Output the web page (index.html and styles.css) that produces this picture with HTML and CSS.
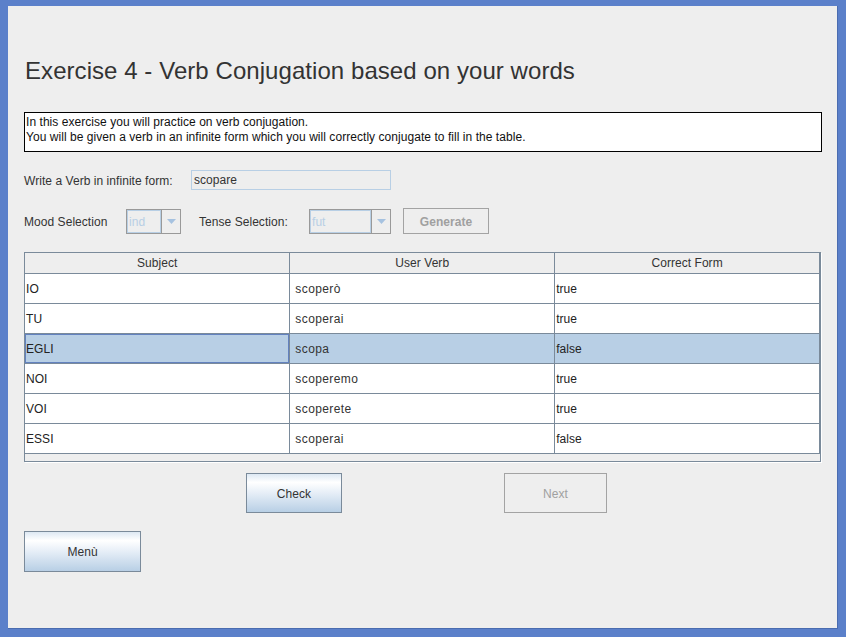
FILE: index.html
```html
<!DOCTYPE html>
<html>
<head>
<meta charset="utf-8">
<link rel="stylesheet" href="styles.css">
</head>
<body>
<div class="frame">
  <h1 class="title">Exercise 4 - Verb Conjugation based on your words</h1>
  <div class="desc">
    <div>In this exercise you will practice on verb conjugation.</div>
    <div>You will be given a verb in an infinite form which you will correctly conjugate to fill in the table.</div>
  </div>
  <div class="verb-row">
    <span class="label verb-label">Write a Verb in infinite form:</span>
    <div class="textfield">scopare</div>
  </div>
  <div class="mood-row">
    <span class="label mood-label">Mood Selection</span>
    <div class="combo combo-mood">
      <div class="combo-field">ind</div>
      <div class="combo-arrow"><svg width="9" height="5" viewBox="0 0 9 5"><path d="M0 0H9L4.5 5Z" fill="#a6c2e0"/></svg></div>
    </div>
    <span class="label tense-label">Tense Selection:</span>
    <div class="combo combo-tense">
      <div class="combo-field">fut</div>
      <div class="combo-arrow"><svg width="9" height="5" viewBox="0 0 9 5"><path d="M0 0H9L4.5 5Z" fill="#a6c2e0"/></svg></div>
    </div>
    <div class="btn-disabled btn-generate">Generate</div>
  </div>
  <div class="pane">
    <table class="grid">
      <thead>
        <tr><th>Subject</th><th>User Verb</th><th>Correct Form</th></tr>
      </thead>
      <tbody>
        <tr><td>IO</td><td class="verb">scoperò</td><td>true</td></tr>
        <tr><td>TU</td><td class="verb">scoperai</td><td>true</td></tr>
        <tr class="selected"><td class="focus">EGLI</td><td class="verb">scopa</td><td>false</td></tr>
        <tr><td>NOI</td><td class="verb">scoperemo</td><td>true</td></tr>
        <tr><td>VOI</td><td class="verb">scoperete</td><td>true</td></tr>
        <tr><td>ESSI</td><td class="verb">scoperai</td><td>false</td></tr>
      </tbody>
    </table>
  </div>
  <div class="actions">
    <div class="btn btn-check">Check</div>
    <div class="btn-disabled btn-next">Next</div>
  </div>
  <div class="btn btn-menu">Menù</div>
</div>
</body>
</html>
```
FILE: styles.css
```css
html, body {
  margin: 0;
  padding: 0;
}
body {
  font-family: "Liberation Sans", Arial, sans-serif;
  font-size: 12px;
  letter-spacing: 0.05px;
  color: #333333;
  background: #5b7fc9;
}
.frame {
  box-sizing: border-box;
  width: 846px;
  height: 637px;
  border-style: solid;
  border-color: #5b80ca;
  border-width: 6px 8px 8px 8px;
  background: #eeeeee;
  padding: 0 16px;
  box-shadow: inset -1px -1px 0 #4a6cb0;
}
.title {
  margin: 51px 0 0 1px;
  font-size: 24px;
  font-weight: normal;
  line-height: 28px;
  letter-spacing: 0.06px;
  color: #333333;
}
.desc {
  margin-top: 27px;
  box-sizing: border-box;
  height: 40px;
  border: 1px solid #000000;
  background: #ffffff;
  padding: 2px 1px 0 1px;
  line-height: 15px;
  color: #111111;
}
.label {
  color: #333333;
  white-space: nowrap;
}
.verb-row {
  margin-top: 18px;
  display: flex;
  align-items: center;
  height: 20px;
}
.verb-label {
  width: 167px;
  flex: none;
  padding-top: 1px;
}
.textfield {
  box-sizing: border-box;
  width: 200px;
  height: 20px;
  border: 1px solid #b8cfe5;
  background: #eeeeee;
  padding-left: 2px;
  line-height: 19px;
  color: #333333;
}
.mood-row {
  margin-top: 18px;
  display: flex;
  align-items: center;
  height: 26px;
}
.mood-label {
  width: 102px;
  flex: none;
  padding-top: 2px;
}
.combo {
  box-sizing: border-box;
  height: 25px;
  border: 1px solid #999999;
  display: flex;
  margin-top: 1px;
}
.combo-mood {
  width: 55px;
}
.combo-tense {
  width: 82px;
}
.combo-field {
  flex: 1;
  box-sizing: border-box;
  border: 1px solid #b8cfe5;
  color: #b8cfe5;
  line-height: 22px;
  padding-left: 1px;
}
.combo-arrow {
  width: 18px;
  border-left: 1px solid #999999;
  display: flex;
  align-items: center;
  justify-content: center;
}
.tense-label {
  margin-left: 18px;
  width: 110px;
  padding-top: 2px;
}
.btn-generate {
  margin-left: 12px;
  width: 86px;
  height: 26px;
  font-weight: bold;
  padding-top: 1px;
}
.btn-disabled {
  box-sizing: border-box;
  border: 1px solid #a3a3a3;
  background: #eeeeee;
  color: #a0a0a0;
  display: flex;
  align-items: center;
  justify-content: center;
}
.pane {
  margin-top: 18px;
  box-sizing: border-box;
  width: 797px;
  height: 210px;
  border: 1px solid #7a8a9a;
  box-shadow: 1px 1px 0 #ffffff;
  background: #eeeeee;
}
.grid {
  width: 795px;
  border-collapse: collapse;
  table-layout: fixed;
}
.grid th {
  box-sizing: border-box;
  height: 20px;
  padding: 1px 0 0 0;
  font-weight: normal;
  text-align: center;
  color: #333333;
  background: #eeeeee;
  border-bottom: 1px solid #7a8a9a;
  border-right: 1px solid #7a8a9a;
}
.grid td {
  box-sizing: border-box;
  height: 30px;
  padding: 2px 0 0 1px;
  background: #ffffff;
  border-bottom: 1px solid #7a8a9a;
  border-right: 1px solid #7a8a9a;
  color: #222222;
}
.grid td.verb {
  padding-left: 5px;
  letter-spacing: 0.4px;
  color: #333333;
}
.grid tr.selected td {
  background: #b8cfe5;
}
.grid td.focus {
  box-shadow: inset 0 0 0 1px #6382bf;
}
.actions {
  margin-top: 11px;
  display: flex;
  padding-left: 222px;
  gap: 162px;
}
.btn {
  box-sizing: border-box;
  border: 1px solid #7a8a9a;
  background: linear-gradient(#dde8f3 0%, #ffffff 22%, #e6eef7 50%, #b8cfe5 100%);
  display: flex;
  align-items: center;
  justify-content: center;
  color: #333333;
  padding-top: 1px;
}
.btn-check {
  width: 96px;
  height: 40px;
}
.btn-next {
  width: 103px;
  height: 40px;
  padding-top: 1px;
}
.btn-menu {
  margin-top: 18px;
  width: 117px;
  height: 41px;
}
```
